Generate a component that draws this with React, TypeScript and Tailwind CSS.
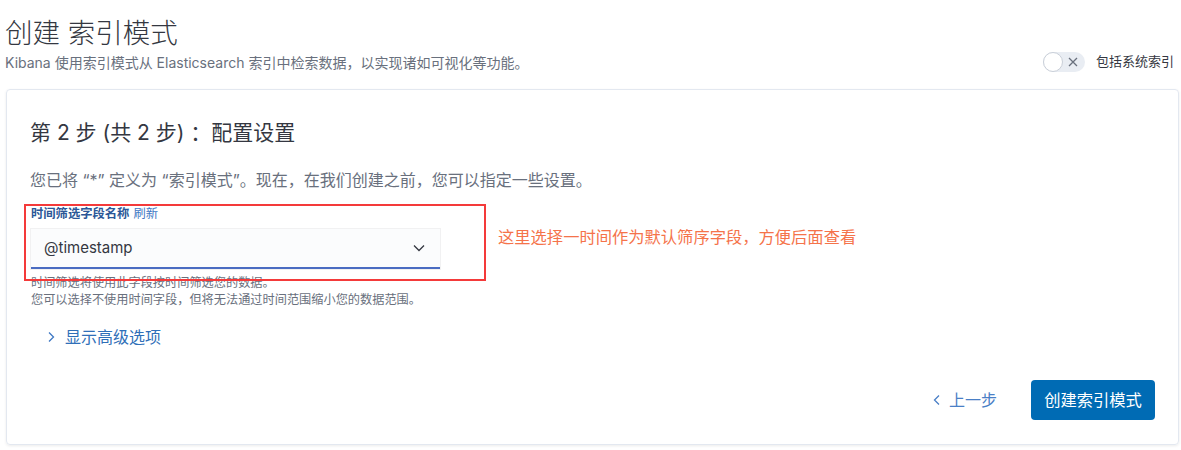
import React from "react";

const font = { fontFamily: '"Inter", "Noto Sans CJK SC", sans-serif' };

const ChevronDown = () => (
  <svg width="16" height="16" viewBox="0 0 16 16" fill="none">
    <path d="M3 5.5l5 5 5-5" stroke="#343741" strokeWidth="1.3" />
  </svg>
);

const ChevronRight = ({ color }: { color: string }) => (
  <svg width="12" height="12" viewBox="0 0 12 12" fill="none">
    <path d="M4 1.5l4.5 4.5L4 10.5" stroke={color} strokeWidth="1.3" />
  </svg>
);

const ChevronLeft = ({ color }: { color: string }) => (
  <svg width="12" height="12" viewBox="0 0 12 12" fill="none">
    <path d="M8 1.5L3.5 6 8 10.5" stroke={color} strokeWidth="1.3" />
  </svg>
);

function SystemToggle() {
  return (
    <div className="flex items-center gap-[11px]">
      <div className="relative w-[42px] h-[20px] rounded-full bg-[#e9edf3] flex items-center">
        <div className="w-[20px] h-[20px] rounded-full bg-white border border-[#c9cfd8]" />
        <svg className="absolute right-[6px]" width="12" height="12" viewBox="0 0 12 12">
          <path d="M2 2l8 8M10 2l-8 8" stroke="#69707d" strokeWidth="1.3" />
        </svg>
      </div>
      <span className="text-[13px] text-[#343741] whitespace-nowrap">包括系统索引</span>
    </div>
  );
}

export default function App() {
  return (
    <div
      className="w-[1181px] h-[450px] overflow-hidden bg-white pl-[5px] pr-[2px]"
      style={font}
    >
      <div className="flex justify-between items-end pt-[15px]">
        <div>
          <h1 className="text-[27.5px] leading-[36px] font-light text-[#343741]">
            创建 索引模式
          </h1>
          <p className="mt-[2px] text-[14px] leading-[20px] text-[#69707d]">
            Kibana 使用索引模式从 Elasticsearch 索引中检索数据，以实现诸如可视化等功能。
          </p>
        </div>
        <div className="mb-[1px] mr-[5px]">
          <SystemToggle />
        </div>
      </div>

      <div className="mt-[16px] ml-[1px] w-[1173px] h-[356px] border border-[#e3e8f0] rounded-[4px] shadow-[0_1px_3px_rgba(0,0,0,0.08)] pt-[29px] pl-[23px] pr-[23px] flex flex-col">
        <h2 className="text-[21px] leading-[28px] text-[#343741]">
          第 2 步 (共 2 步) ：配置设置
        </h2>
        <p className="mt-[23px] text-[16px] leading-[20px] text-[#69707d]">
          您已将 “*” 定义为 “索引模式”。现在，在我们创建之前，您可以指定一些设置。
        </p>

        <div className="relative mt-[16px] w-[410px]">
          <div className="text-[12.3px] leading-[16px] pl-[1px]">
            <span className="font-bold text-[#2b5797]">时间筛选字段名称</span>
            <span className="ml-[4px] text-[#3f78c4]">刷新</span>
          </div>
          <div className="mt-[7px] ml-[1px] w-[409px] h-[40px] bg-[#fbfcfd] shadow-[0_0_0_1px_rgba(16,22,26,0.06)] border-b-2 border-[#4a6cc2] flex items-center justify-between pl-[13px] pr-[13px]">
            <span className="text-[15px] text-[#343741]">@timestamp</span>
            <ChevronDown />
          </div>
          <div className="mt-[5px] pl-[1px] text-[12.2px] leading-[17px] text-[#69707d] whitespace-nowrap">
            <div>时间筛选将使用此字段按时间筛选您的数据。</div>
            <div>您可以选择不使用时间字段，但将无法通过时间范围缩小您的数据范围。</div>
          </div>
          <div className="absolute left-[-6px] top-[-2px] w-[462px] h-[77px] border-2 border-[#f43a3a]" />
          <div className="absolute left-[468px] top-[20px] whitespace-nowrap text-[16.3px] leading-[22px] text-[#f5734a]">
            这里选择一时间作为默认筛序字段，方便后面查看
          </div>
        </div>

        <div className="mt-[19px] flex items-center gap-[8px] pl-[15px] text-[16px] leading-[20px]">
          <ChevronRight color="#3f78c4" />
          <span className="text-[#2f6fb8]">显示高级选项</span>
        </div>

        <div className="mt-[33px] flex justify-end items-center gap-[34px]">
          <div className="flex items-center gap-[6px] text-[16px] text-[#4a7fc6]">
            <ChevronLeft color="#4a7fc6" />
            <span>上一步</span>
          </div>
          <button className="h-[40px] w-[124px] rounded-[4px] bg-[#006bb4] text-white text-[16.3px]">
            创建索引模式
          </button>
        </div>
      </div>
    </div>
  );
}
